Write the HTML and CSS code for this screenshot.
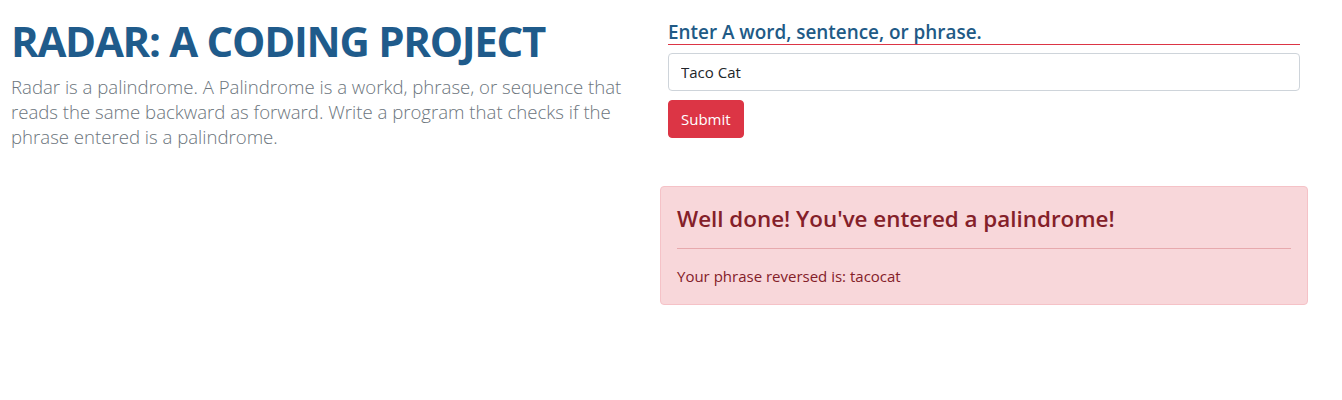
FILE: index.html
```html
<!DOCTYPE html>
<html lang="en">
<head>
<meta charset="utf-8">
<title>Radar</title>
<link rel="stylesheet" href="styles.css">
</head>
<body>
<main class="page">
  <section class="intro">
    <h1 class="title">RADAR: A CODING PROJECT</h1>
    <p class="lead">Radar is a palindrome. A Palindrome is a workd, phrase, or sequence that reads the same backward as forward. Write a program that checks if the phrase entered is a palindrome.</p>
  </section>
  <section class="app">
    <form class="form">
      <label class="form-label" for="phrase">Enter A word, sentence, or phrase.</label>
      <input class="form-input" id="phrase" type="text" value="Taco Cat">
      <button class="btn" type="button">Submit</button>
    </form>
    <div class="alert">
      <h4 class="alert-heading">Well done! You've entered a palindrome!</h4>
      <hr class="alert-rule">
      <p class="alert-text">Your phrase reversed is: tacocat</p>
    </div>
  </section>
</main>
</body>
</html>
```

FILE: styles.css
```css
* { box-sizing: border-box; }
body {
  margin: 0;
  font-family: "Open Sans", "Noto Sans", sans-serif;
  color: #212529;
  background: #fff;
}
.page {
  display: flex;
  padding: 14px 34px 0 11px;
  gap: 20px;
}
.intro {
  width: 629px;
  flex: none;
}
.title {
  margin: 0;
  font-size: 42px;
  line-height: 54px;
  font-weight: 700;
  color: #1f5b8b;
  letter-spacing: -1.3px;
}
.lead {
  margin: 6px 0 0;
  font-size: 18.6px;
  line-height: 25px;
  font-weight: 300;
  color: #6c757d;
}
.app {
  flex: 1;
}
.form {
  padding: 0 8px;
  display: flex;
  flex-direction: column;
  align-items: flex-start;
}
.form-label {
  display: block;
  width: 100%;
  font-size: 18.9px;
  font-weight: 600;
  color: #215a86;
  line-height: 24px;
  padding-top: 6px;
  border-bottom: 1px solid #dc3545;
}
.form-input {
  margin-top: 8px;
  width: 100%;
  height: 38px;
  padding: 6px 12px;
  font: inherit;
  font-size: 15px;
  color: #212529;
  border: 1px solid #ced4da;
  border-radius: 4px;
}
.btn {
  margin-top: 9px;
  height: 38px;
  padding: 0 12px;
  font: inherit;
  font-size: 15px;
  color: #fff;
  background: #dc3545;
  border: 1px solid #dc3545;
  border-radius: 4px;
}
.alert {
  margin-top: 48px;
  padding: 16px 16px 10px;
  background: #f8d7da;
  border: 1px solid #f5c2c7;
  border-radius: 4px;
  color: #842029;
}
.alert-heading {
  margin: 0;
  font-size: 22.4px;
  line-height: 32px;
  font-weight: 600;
  color: #842029;
}
.alert-rule {
  margin: 13px 0 15px;
  border: 0;
  border-top: 1px solid #e7a9ad;
}
.alert-text {
  margin: 0 0 6px;
  font-size: 15px;
  line-height: 24px;
}
```
